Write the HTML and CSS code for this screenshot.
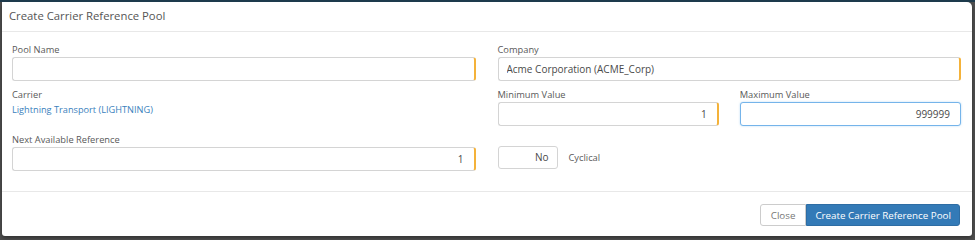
FILE: index.html
```html
<!DOCTYPE html>
<html lang="en">
  <head>
    <meta charset="UTF-8" />
    <title>Create Carrier Reference Pool</title>
    <link rel="stylesheet" href="styles.css">
  </head>
  <body>
    <div class="modal">
      <div class="modal-header">Create Carrier Reference Pool</div>
      <div class="modal-body">
        <div class="row">
          <div class="field">
            <label>Pool Name</label>
            <input type="text" class="required" value="" />
          </div>
          <div class="field">
            <label>Company</label>
            <input type="text" class="required text-left" value="Acme Corporation (ACME_Corp)" />
          </div>
        </div>
        <div class="row">
          <div class="field">
            <label>Carrier</label>
            <div class="link">Lightning Transport (LIGHTNING)</div>
          </div>
          <div class="split">
            <div class="field">
              <label>Minimum Value</label>
              <input type="text" class="required" value="1" />
            </div>
            <div class="field">
              <label>Maximum Value</label>
              <input type="text" class="focused" value="999999" />
            </div>
          </div>
        </div>
        <div class="row">
          <div class="field">
            <label>Next Available Reference</label>
            <input type="text" class="required" value="1" />
          </div>
          <div class="toggle-row">
            <div class="toggle">No</div>
            <span class="toggle-label">Cyclical</span>
          </div>
        </div>
      </div>
      <div class="modal-footer">
        <div class="btn-group">
          <button class="btn">Close</button>
          <button class="btn btn-primary">Create Carrier Reference Pool</button>
        </div>
      </div>
    </div>
  </body>
</html>
```

FILE: styles.css
```css
* {
  margin: 0;
  padding: 0;
  box-sizing: border-box;
  font-family: "Open Sans", Arial, sans-serif;
}
body {
  background-color: #4f4f4f;
  border-top: 2px solid #1d3a4c;
  padding: 0 3px 0 2px;
  height: 240px;
  overflow: hidden;
}
.modal {
  background-color: white;
  height: 234px;
  border-radius: 0 5px 3px 3px;
  box-shadow: 0 2px 4px rgba(0, 0, 0, 0.4);
  display: flex;
  flex-direction: column;
}
.modal-header {
  height: 30px;
  padding: 6px 7px;
  font-size: 11.3px;
  color: #555;
  border-bottom: 1px solid #e8e8e8;
}
.modal-body {
  flex-grow: 1;
  padding: 11px 11px 0 10px;
}
.row {
  display: grid;
  grid-template-columns: 1fr 1fr;
  column-gap: 22px;
  height: 45px;
}
.split {
  display: grid;
  grid-template-columns: 1fr 1fr;
  column-gap: 21px;
}
.field label {
  display: block;
  font-size: 9.3px;
  color: #595959;
  height: 14px;
  line-height: 14px;
}
.field input {
  display: block;
  width: 100%;
  height: 24px;
  border: 1px solid #d4d4d4;
  border-radius: 3px;
  padding: 0 10px;
  font-size: 10px;
  color: #4a4a4a;
  text-align: right;
  outline: none;
}
.field input.text-left {
  text-align: left;
  padding-left: 8px;
}
.field input.required {
  border-right: 2px solid #f4b23a;
}
.field input.focused {
  border-color: #75b4ea;
  box-shadow: 0 0 2px rgba(102, 175, 233, 0.5);
}
.link {
  font-size: 9.2px;
  color: #3b7fbd;
  line-height: 16px;
}
.toggle-row {
  display: flex;
  align-items: center;
  padding-top: 3px;
}
.toggle {
  width: 60px;
  height: 23px;
  border: 1px solid #d4d4d4;
  border-radius: 3px;
  font-size: 10px;
  color: #4a4a4a;
  text-align: right;
  padding-right: 8px;
  line-height: 21px;
}
.toggle-label {
  font-size: 9.3px;
  color: #595959;
  margin-left: 11px;
}
.modal-footer {
  height: 45px;
  border-top: 1px solid #e8e8e8;
  display: flex;
  justify-content: flex-end;
  align-items: flex-start;
  padding: 12px 12px 0 0;
}
.btn-group {
  display: flex;
}
.btn {
  height: 22px;
  border: 1px solid #ccc;
  background-color: white;
  color: #777;
  font-size: 9.8px;
  padding: 0 10px;
  border-radius: 3px 0 0 3px;
}
.btn-primary {
  background-color: #337ab7;
  border-color: #2e6da4;
  color: white;
  border-radius: 0 3px 3px 0;
  padding: 0 8px;
}
```
